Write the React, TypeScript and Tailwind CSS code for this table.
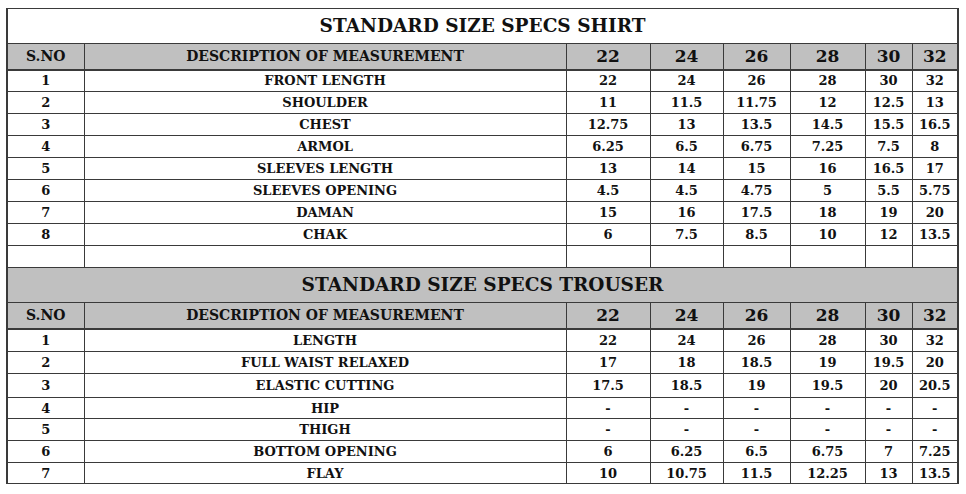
const shirtRows: [string, string[]][] = [
  ["FRONT LENGTH", ["22", "24", "26", "28", "30", "32"]],
  ["SHOULDER", ["11", "11.5", "11.75", "12", "12.5", "13"]],
  ["CHEST", ["12.75", "13", "13.5", "14.5", "15.5", "16.5"]],
  ["ARMOL", ["6.25", "6.5", "6.75", "7.25", "7.5", "8"]],
  ["SLEEVES LENGTH", ["13", "14", "15", "16", "16.5", "17"]],
  ["SLEEVES OPENING", ["4.5", "4.5", "4.75", "5", "5.5", "5.75"]],
  ["DAMAN", ["15", "16", "17.5", "18", "19", "20"]],
  ["CHAK", ["6", "7.5", "8.5", "10", "12", "13.5"]],
];

const trouserRows: [string, string[], string][] = [
  ["LENGTH", ["22", "24", "26", "28", "30", "32"], "h-[23px]"],
  ["FULL WAIST RELAXED", ["17", "18", "18.5", "19", "19.5", "20"], "h-[22px]"],
  ["ELASTIC CUTTING", ["17.5", "18.5", "19", "19.5", "20", "20.5"], "h-[24px]"],
  ["HIP", ["-", "-", "-", "-", "-", "-"], "h-[21px]"],
  ["THIGH", ["-", "-", "-", "-", "-", "-"], "h-[22px]"],
  ["BOTTOM OPENING", ["6", "6.25", "6.5", "6.75", "7", "7.25"], "h-[22px]"],
  ["FLAY", ["10", "10.75", "11.5", "12.25", "13", "13.5"], "h-[21px]"],
];

const sizes = ["22", "24", "26", "28", "30", "32"];

const cell = "border border-[#3a3a3a] text-center align-middle p-0 leading-none";

function HeaderRow() {
  return (
    <tr className="h-[26px] bg-[#c0c0c0]">
      <th className={`${cell} border-b-2 text-[14px]`}>S.NO</th>
      <th className={`${cell} border-b-2 text-[14px]`}>DESCRIPTION OF MEASUREMENT</th>
      {sizes.map((s) => (
        <th key={s} className={`${cell} border-b-2 text-[17px]`}>
          {s}
        </th>
      ))}
    </tr>
  );
}

function DataRow({ n, label, values, h }: { n: number; label: string; values: string[]; h: string }) {
  return (
    <tr className={h}>
      <td className={`${cell} text-[13px]`}>{n}</td>
      <td className={`${cell} text-[13px]`}>{label}</td>
      {values.map((v, i) => (
        <td key={i} className={`${cell} text-[13px]`}>
          {v}
        </td>
      ))}
    </tr>
  );
}

export default function App() {
  return (
    <div className="min-h-screen w-[966px] h-[494px] bg-white pl-[6px] pt-[8px]">
      <table
        className="table-fixed border-collapse w-[951px] border-l-2 border-r-2 border-[#3a3a3a] font-bold text-[#111]"
        style={{ fontFamily: '"DejaVu Serif", "Liberation Serif", serif' }}
      >
        <colgroup>
          <col className="w-[77px]" />
          <col className="w-[482px]" />
          <col className="w-[84px]" />
          <col className="w-[73px]" />
          <col className="w-[67px]" />
          <col className="w-[75px]" />
          <col className="w-[47px]" />
          <col className="w-[46px]" />
        </colgroup>
        <tbody>
          <tr className="h-[35px]">
            <td colSpan={8} className={`${cell} border-l-2 border-r-2 text-[18.5px]`}>
              STANDARD SIZE SPECS SHIRT
            </td>
          </tr>
          <HeaderRow />
          {shirtRows.map(([label, values], i) => (
            <DataRow key={label} n={i + 1} label={label} values={values} h="h-[22px]" />
          ))}
          <tr className="h-[22px]">
            {Array.from({ length: 8 }).map((_, i) => (
              <td key={i} className={cell}></td>
            ))}
          </tr>
          <tr className="h-[35px] bg-[#c0c0c0]">
            <td colSpan={8} className={`${cell} border-l-2 border-r-2 text-[18.5px]`}>
              STANDARD SIZE SPECS TROUSER
            </td>
          </tr>
          <HeaderRow />
          {trouserRows.map(([label, values, h], i) => (
            <DataRow key={label} n={i + 1} label={label} values={values} h={h} />
          ))}
        </tbody>
      </table>
    </div>
  );
}
